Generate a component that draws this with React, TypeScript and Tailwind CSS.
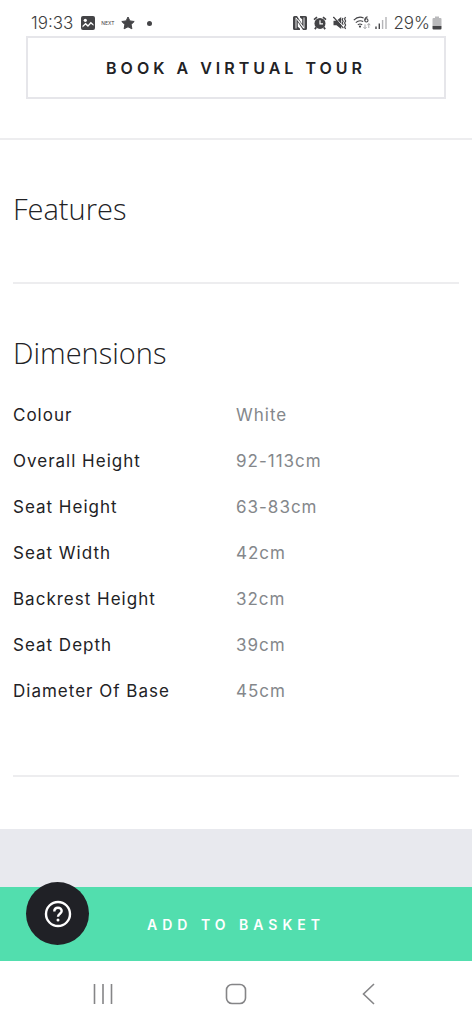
import React from "react";

const dimensions: [string, string][] = [
  ["Colour", "White"],
  ["Overall Height", "92-113cm"],
  ["Seat Height", "63-83cm"],
  ["Seat Width", "42cm"],
  ["Backrest Height", "32cm"],
  ["Seat Depth", "39cm"],
  ["Diameter Of Base", "45cm"],
];

function PictureIcon() {
  return (
    <svg width="14" height="14" viewBox="0 0 14 14" aria-hidden="true">
      <rect width="14" height="14" rx="2" fill="#444447" />
      <circle cx="4.3" cy="4.3" r="1.6" fill="#fff" />
      <path d="M1.500 9.800 4.600 6.800l2.400 2.300 2.800-3.300 2.700 2.500v1.500L9.900 7.800l-2.900 3.300-2.500-2.300-3 2.600z" fill="#fff" />
    </svg>
  );
}

function StarIcon() {
  return (
    <svg width="14" height="14" viewBox="0 0 14 14" aria-hidden="true">
      <path
        d="m7 1 1.900 3.900 4.300.6-3.100 3 .8 4.300L7 10.800l-3.900 2 .8-4.300-3.100-3 4.300-.6z"
        fill="#444447"
        stroke="#444447"
        strokeLinejoin="round"
      />
    </svg>
  );
}

function NfcIcon() {
  return (
    <svg width="14" height="14" viewBox="0 0 14 14" aria-hidden="true">
      <path d="M1.500 0H4l5.200 8V3.200L7 1.500V0h5.500Q14 0 14 1.500v11q0 1.500-1.500 1.500H10L4.800 6v4.800L7 12.500V14H1.500Q0 14 0 12.500v-11Q0 0 1.500 0z" fill="#444447" />
      <path d="M3 12.500V1.800l7.600 10.400M11 1.500v10.700L5 3.500" fill="none" stroke="#fff" strokeWidth=".9" />
    </svg>
  );
}

function AlarmIcon() {
  return (
    <svg width="14" height="14" viewBox="0 0 14 14" aria-hidden="true">
      <circle cx="7" cy="7.400" r="5.500" fill="#444447" />
      <path d="m1 3.600 3-2.400M13 3.600l-3-2.400M3.200 11.400l-1.400 1.700M10.800 11.400l1.400 1.700" stroke="#444447" strokeWidth="1.700" />
      <path d="M7 4.200v3.600h3" fill="none" stroke="#fff" strokeWidth="1.200" />
    </svg>
  );
}

function VibrateIcon() {
  return (
    <svg width="14" height="14" viewBox="0 0 14 14" aria-hidden="true">
      <path d="M.5 4.800h3L8.200 1v12L3.500 9.200h-3z" fill="#444447" />
      <path d="m1.500.8 8 9" stroke="#fff" strokeWidth="1" />
      <path d="m.4 1 10 11.200" stroke="#444447" strokeWidth="1.200" />
      <path
        d="m10 2-.8 1.700 1 1.600-1 1.700 1 1.700M12.500 1l-.9 2 1 2-1 2 1 2-1 2 1 2"
        fill="none"
        stroke="#444447"
        strokeWidth="1.200"
      />
    </svg>
  );
}

function WifiIcon() {
  return (
    <svg width="18" height="14" viewBox="0 0 18 14" aria-hidden="true">
      <path
        d="M.8 4.200C4 .9 7.400.5 10.600 2M2.800 6.700C5 4.600 7.800 4.200 10.200 5.600M4.800 8.900c1.400-1.200 3-1.200 4.400 0"
        fill="none"
        stroke="#444447"
        strokeWidth="1.100"
      />
      <circle cx="7" cy="10.600" r="1.100" fill="#444447" />
      <path d="M14.600.8c-1.800.4-2.800 1.800-2.800 3.600" fill="none" stroke="#444447" strokeWidth="1.100" />
      <circle cx="13.400" cy="4.400" r="1.600" fill="none" stroke="#444447" strokeWidth="1.100" />
      <path
        d="M12 8.400v4.200m-1.500-1.500 1.500 1.600 1.500-1.600M15.800 12V7.600m-1.500 1.600 1.500-1.600 1.500 1.600"
        fill="none"
        stroke="#a5a5a8"
        strokeWidth="1"
      />
    </svg>
  );
}

function SignalIcon() {
  return (
    <svg width="12" height="14" viewBox="0 0 12 14" aria-hidden="true">
      <path d="M1 10.500V13" stroke="#444447" strokeWidth="1.400" />
      <path d="M4.300 7.500V13" stroke="#444447" strokeWidth="1.400" />
      <path d="M7.600 4V13M11 1v12" stroke="#b4b4b7" strokeWidth="1.400" />
    </svg>
  );
}

function BatteryIcon() {
  return (
    <svg width="10" height="14" viewBox="0 0 10 14" aria-hidden="true">
      <path d="M3 .5h4V2h1.500Q9.500 2 9.500 3v7H.5V3q0-1 1-1H3z" fill="#b9b9bb" />
      <path d="M.5 10h9v2.500q0 1-1 1h-7q-1 0-1-1z" fill="#444447" />
    </svg>
  );
}

function StatusBar() {
  return (
    <header className="flex h-9 items-center justify-between pt-[10px] pr-[30px] pl-[31px] font-['Inter',sans-serif] text-[17px] leading-6 font-light text-[#3d3d40]">
      <div className="flex items-center">
        <span>19:33</span>
        <span className="ml-2 flex items-center gap-[6px]">
          <PictureIcon />
          <span className="text-[5px] leading-none font-normal">NEXT</span>
          <StarIcon />
        </span>
        <span className="ml-3 size-[5px] rounded-full bg-[#444447]" />
      </div>
      <div className="flex items-center gap-[6px]">
        <NfcIcon />
        <AlarmIcon />
        <VibrateIcon />
        <span className="flex items-center gap-1">
          <WifiIcon />
          <SignalIcon />
        </span>
        <span className="flex items-center gap-[2px]">
          29%
          <BatteryIcon />
        </span>
      </div>
    </header>
  );
}

function SystemNav() {
  return (
    <nav aria-label="System" className="grid h-[63px] grid-cols-[1fr_56px_1fr] items-center bg-white px-[74px] pt-[3px] text-[#858587]">
      <button aria-label="Recent apps" className="flex size-[58px] items-center justify-center">
        <svg width="20" height="22" viewBox="0 0 20 22" fill="none" stroke="currentColor" strokeWidth="1.600">
          <path d="M1.500 1v20M10 1v20M18.500 1v20" />
        </svg>
      </button>
      <button aria-label="Home" className="flex size-14 items-center justify-center">
        <svg width="22" height="22" viewBox="0 0 22 22" fill="none" stroke="currentColor" strokeWidth="1.600">
          <rect x="1.500" y="1.500" width="19" height="19" rx="5.500" />
        </svg>
      </button>
      <button aria-label="Back" className="flex size-[58px] items-center justify-center justify-self-end">
        <svg width="14" height="22" viewBox="0 0 14 22" fill="none" stroke="currentColor" strokeWidth="1.600">
          <path d="M12 1 1.500 11 12 21" />
        </svg>
      </button>
    </nav>
  );
}

export default function App() {
  return (
    <div className="flex min-h-screen flex-col bg-white text-[#222225]">
      <StatusBar />
      <main className="flex-1">
        <div className="border-b-2 border-[#ededef] px-[26px] pb-[39px]">
          <button className="h-[63px] w-full border-2 border-[#e6e6ea] font-['Inter',sans-serif] text-[16px] font-semibold tracking-[4px]">
            BOOK A VIRTUAL TOUR
          </button>
        </div>
        <div className="px-[13px]">
          <section className="border-b-2 border-[#ededef] pt-[49px] pb-[53px]">
            <h2 className="font-['Open_Sans',sans-serif] text-[29px] leading-10 font-light">Features</h2>
          </section>
          <section className="border-b-2 border-[#ededef] pt-[49px] pb-[61px]">
            <h2 className="font-['Open_Sans',sans-serif] text-[29px] leading-10 font-light">Dimensions</h2>
            <table className="mt-[19px] w-full table-fixed text-left font-['Inter',sans-serif] text-[17px] leading-6 tracking-[1px]">
              <tbody>
                {dimensions.map(([name, value]) => (
                  <tr key={name} className="h-[46px]">
                    <th scope="row" className="p-0 font-normal">{name}</th>
                    <td className="p-0 text-[#84878b]">{value}</td>
                  </tr>
                ))}
              </tbody>
            </table>
          </section>
        </div>
      </main>
      <div className="mt-[52px] h-[58px] bg-[#e8e9ee]" />
      <div className="relative">
        <button className="h-[74px] w-full bg-[#52deae] font-['Inter',sans-serif] text-[14px] font-semibold tracking-[5px] text-white">
          ADD TO BASKET
        </button>
        <button
          aria-label="Help"
          className="absolute -top-[5px] left-[26px] flex size-[63px] items-center justify-center rounded-full bg-[#202126] text-white"
        >
          <svg width="28" height="28" viewBox="0 0 28 28" fill="none" stroke="currentColor" strokeWidth="2.400">
            <circle cx="14" cy="14" r="12" />
            <path d="M10.300 11.500c0-2.200 1.600-3.700 3.700-3.700s3.700 1.400 3.700 3.300c0 2.600-3.700 2.800-3.700 5.700" />
            <circle cx="14" cy="20" r="1.500" fill="currentColor" stroke="none" />
          </svg>
        </button>
      </div>
      <SystemNav />
    </div>
  );
}
